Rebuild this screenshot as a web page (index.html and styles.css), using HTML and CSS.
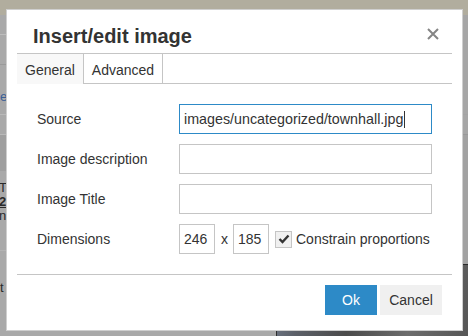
FILE: index.html
```html
<!DOCTYPE html>
<html lang="en">
  <head>
    <meta charset="UTF-8" />
    <meta name="viewport" content="width=device-width, initial-scale=1.0" />
    <title>Insert/edit image</title>
    <link rel="stylesheet" href="styles.css">
  </head>
  <body>
    <!-- page behind the dialog -->
    <div class="page">
      <div class="topbar"></div>
      <div class="page-body">
        <div class="side">
          <div class="side-row r1"></div>
          <div class="side-row r2"></div>
          <div class="side-row r3"><span class="link">e</span></div>
          <div class="side-row r4"></div>
          <div class="side-row r5"></div>
          <div class="side-row r6">
            <span>T</span>
            <b>2</b>
            <span>n</span>
          </div>
          <div class="side-row r7"><span>t</span></div>
        </div>
        <div class="main">
          <div class="main-row m1"></div>
          <div class="main-row m2"></div>
          <div class="main-row m3"></div>
          <div class="photo"></div>
        </div>
      </div>
    </div>

    <div class="modal">
      <div class="modal-head">
        <h1>Insert/edit image</h1>
        <svg class="close" width="12" height="12" viewBox="0 0 12 12">
          <path d="M1 1 L11 11 M11 1 L1 11" stroke="#858585" stroke-width="2" fill="none" />
        </svg>
      </div>

      <div class="tabs">
        <div class="tab active">General</div>
        <div class="tab">Advanced</div>
      </div>

      <div class="form">
        <label>Source</label>
        <div class="field focused">images/uncategorized/townhall.jpg<span class="caret"></span></div>

        <label>Image description</label>
        <div class="field"></div>

        <label>Image Title</label>
        <div class="field"></div>

        <label>Dimensions</label>
        <div class="dims">
          <div class="field small">246</div>
          <span class="times">x</span>
          <div class="field small">185</div>
          <span class="check">
            <svg width="12" height="10" viewBox="0 0 12 10">
              <path d="M1.5 5 L4.5 8 L10.5 1.5" stroke="#333" stroke-width="2.4" fill="none" />
            </svg>
          </span>
          <span class="check-label">Constrain proportions</span>
        </div>
      </div>

      <div class="modal-foot">
        <button class="btn ok">Ok</button>
        <button class="btn cancel">Cancel</button>
      </div>
    </div>
  </body>
</html>
```

FILE: styles.css
```css
* {
  margin: 0;
  padding: 0;
  box-sizing: border-box;
}

body {
  font-family: "Liberation Sans", Arial, sans-serif;
  background-color: #a9a9a9;
  color: #333;
  width: 468px;
  height: 336px;
  overflow: hidden;
}

/* background page */
.page {
  height: 336px;
}

.topbar {
  height: 15px;
  background-color: #b1ad9e;
}

.page-body {
  display: grid;
  grid-template-columns: 276px 1fr;
}

.side-row {
  border-bottom: 1px solid #b9b9b9;
  font-size: 13px;
  color: #2a2a2a;
  line-height: 14px;
}

.r1 { height: 20px; border-bottom-color: #bdbdbd; }
.r2 { height: 30px; border-bottom-color: #9a9a9a; }
.r3 { height: 50px; padding-top: 25px; }
.r4 { height: 20px; }
.r5 { height: 36px; background-color: #9f9f9f; border-bottom: none; }
.r6 { height: 80px; padding-top: 10px; border-bottom-color: #b3b3b3; }
.r7 { height: 50px; padding-top: 30px; border-bottom: none; }

.link {
  color: #3b5f96;
}

.r6 span,
.r6 b {
  display: block;
  margin-left: -1px;
}

.r6 b {
  text-decoration: underline;
}

.main {
  border-left: 1px solid #2e2e2e;
  margin-top: 0;
}

.main-row {
  border-bottom: 1px solid #999;
}

.m1 { height: 100px; border-bottom-color: #a3a3a3; background-color: #a6a6a6; }
.m2 { height: 20px; background-color: #a6a6a6; }
.m3 { height: 129px; border-bottom: none; background-color: #a2a2a2; }

.photo {
  height: 72px;
  border-top: 1px solid #2a2a2a;
  background: linear-gradient(100deg, #6f7888 0, #5c6068 15%, #4b4b4b 40%, #6c6c6c 70%, #565656 100%);
}

/* dialog */
.modal {
  position: absolute;
  top: 9px;
  left: 6px;
  width: 457px;
  background-color: #fff;
  border: 1px solid #cfcfcf;
  padding: 0 10px;
}

.modal-head {
  display: flex;
  justify-content: space-between;
  align-items: flex-start;
  padding: 14px 13px 5px 16px;
  border-bottom: 1px solid #c5c5c5;
}

.modal-head h1 {
  font-size: 20px;
  line-height: 24px;
  font-weight: bold;
  color: #333;
}

.close {
  margin-top: 4px;
}

.tabs {
  display: flex;
  border-bottom: 1px solid #c5c5c5;
  height: 30px;
}

.tab {
  font-size: 14px;
  line-height: 25px;
  padding: 4px 8px 0;
  height: 29px;
  border-right: 1px solid #c5c5c5;
}

.tab.active {
  background-color: #f8f8f8;
  height: 30px;
}

.form {
  display: grid;
  grid-template-columns: 142px 253px;
  row-gap: 10px;
  align-items: center;
  padding: 20px 21px 20px 20px;
}

.form label {
  font-size: 14px;
}

.field {
  height: 30px;
  border: 1px solid #c5c5c5;
  padding: 0 4px;
  font-size: 14px;
  line-height: 28px;
  color: #333;
  white-space: nowrap;
}

.field.focused {
  border-color: #2d8ac7;
  font-size: 14.3px;
}

.caret {
  display: inline-block;
  width: 1px;
  height: 17px;
  background-color: #333;
  vertical-align: -4px;
  margin-left: 1px;
}

.dims {
  display: flex;
  align-items: center;
}

.field.small {
  width: 36px;
}

.times {
  font-size: 14px;
  margin: 0 5px 0 6px;
}

.check {
  display: flex;
  align-items: center;
  justify-content: center;
  width: 17px;
  height: 17px;
  margin-left: 6px;
  border: 1px solid #c5c5c5;
  background-color: #f0f0f0;
}

.check-label {
  font-size: 14px;
  margin-left: 4px;
  white-space: nowrap;
}

.modal-foot {
  display: flex;
  justify-content: flex-end;
  border-top: 1px solid #c5c5c5;
  padding: 10px 10px 15px;
}

.btn {
  font-family: "Liberation Sans", Arial, sans-serif;
  font-size: 14px;
  height: 30px;
  border: none;
  cursor: pointer;
}

.ok {
  width: 52px;
  background-color: #2d8ac7;
  color: #fff;
}

.cancel {
  width: 62px;
  margin-left: 3px;
  background-color: #f0f0f0;
  color: #333;
}
```
